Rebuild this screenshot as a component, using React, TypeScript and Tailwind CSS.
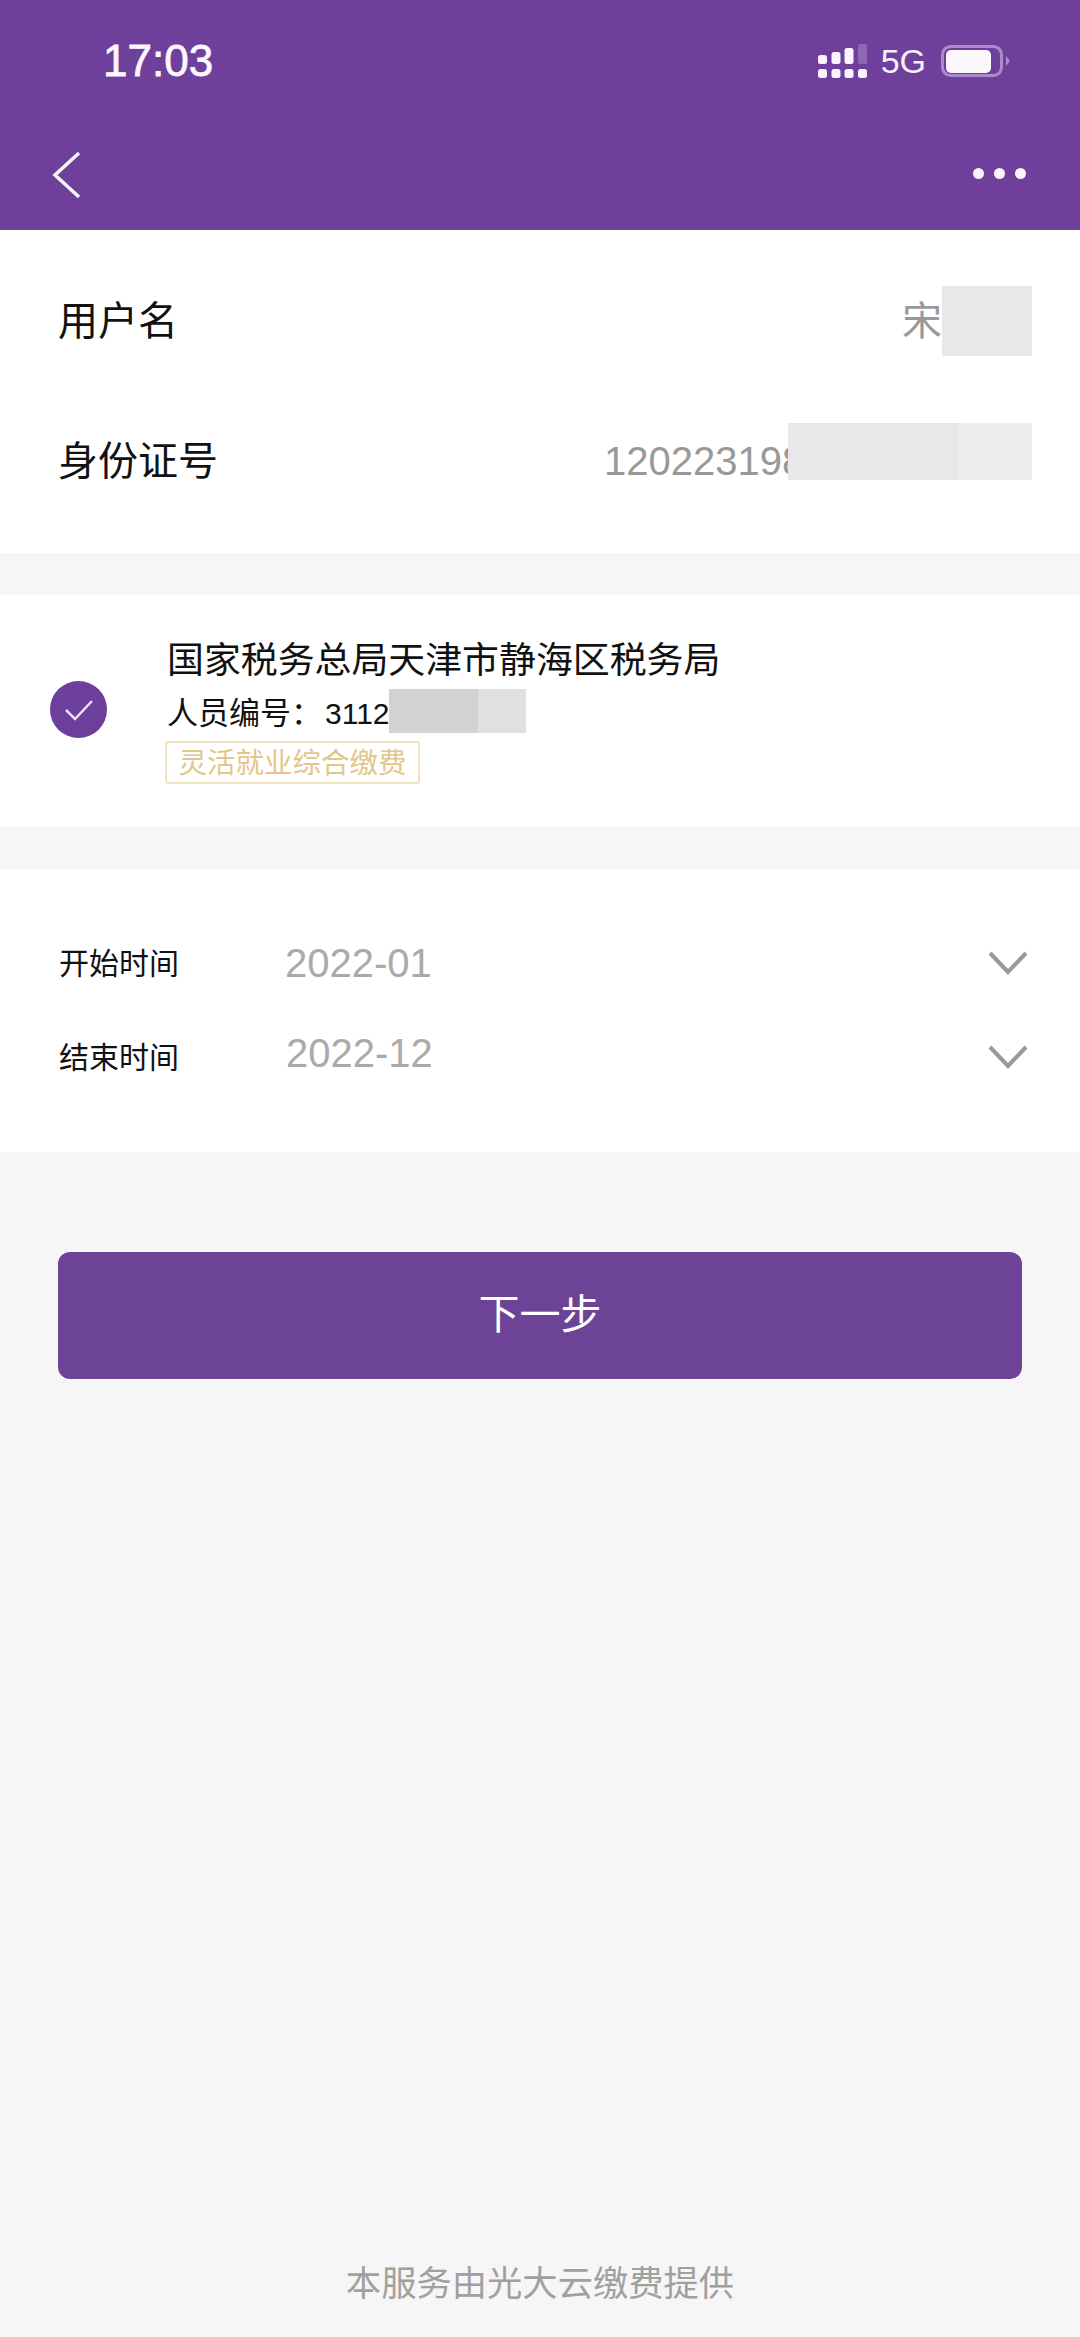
export default function App() {
  return (
    <div className="w-[1080px] h-[2337px] bg-[#f6f6f6] flex flex-col overflow-hidden font-['Liberation_Sans','Noto_Sans_CJK_SC',sans-serif] text-[#111]">
      <header className="h-[230px] shrink-0 bg-[#6e409b] text-white flex flex-col">
        <div className="h-[122px] shrink-0 pt-[36px] pl-[103px] pr-[69px] flex items-start justify-between">
          <span className="text-[44px] leading-[50px] text-[#fdf7ff] [-webkit-text-stroke:0.8px_#fdf7ff]">17:03</span>
          <div className="flex items-start pt-[8px]">
            <svg width="50" height="34" viewBox="0 0 50 34" className="block">
              <rect x="1" y="11" width="9" height="9" rx="2.5" fill="#fbf3fd" />
              <rect x="14.5" y="8" width="9" height="12" rx="2.5" fill="#fbf3fd" />
              <rect x="27.5" y="4" width="9" height="16" rx="2.5" fill="#fbf3fd" />
              <rect x="41" y="0" width="9" height="20" rx="2.5" fill="#8e68b5" />
              <rect x="1" y="25" width="9" height="9" rx="2.5" fill="#fbf3fd" />
              <rect x="14.5" y="25" width="9" height="9" rx="2.5" fill="#fbf3fd" />
              <rect x="27.5" y="25" width="9" height="9" rx="2.5" fill="#fbf3fd" />
              <rect x="41" y="25" width="9" height="9" rx="2.5" fill="#fbf3fd" />
            </svg>
            <span className="ml-[14px] text-[34px] leading-[36px] text-[#f6eefa] mt-[-1px]">5G</span>
            <svg width="70" height="34" viewBox="0 0 70 34" className="block ml-[15px] mt-[1px]">
              <rect x="1.5" y="1.5" width="59" height="29" rx="8" fill="none" stroke="#a98acb" strokeWidth="3" />
              <rect x="5" y="5" width="45" height="23" rx="5" fill="#fdf8fe" />
              <path d="M65 11 L69 16 L65 21 Z" fill="#a98acb" />
            </svg>
          </div>
        </div>
        <div className="flex-1 pl-[52px] pr-[54px] flex items-start justify-between pt-[29px]">
          <svg width="30" height="48" viewBox="0 0 30 48" className="block">
            <path d="M27 2 L3 24 L27 46" fill="none" stroke="#fbf3fd" strokeWidth="3.5" />
          </svg>
          <div className="flex gap-[10px] pt-[17px]">
            <span className="w-[11px] h-[11px] rounded-full bg-[#fbf3fd]" />
            <span className="w-[11px] h-[11px] rounded-full bg-[#fbf3fd]" />
            <span className="w-[11px] h-[11px] rounded-full bg-[#fbf3fd]" />
          </div>
        </div>
      </header>

      <section className="h-[323px] shrink-0 bg-white pt-[46px] pl-[58px] pr-[48px]">
        <div className="h-[90px] flex items-center justify-between">
          <span className="text-[40px] leading-[50px]">用户名</span>
          <div className="flex items-center">
            <span className="text-[40px] leading-[50px] text-[#999]">宋</span>
            <div className="w-[90px] h-[70px] bg-[#e8e8e8]" />
          </div>
        </div>
        <div className="h-[93px] flex items-center justify-between mt-[48px]">
          <span className="text-[40px] leading-[50px]">身份证号</span>
          <div className="relative flex items-center w-[428px] overflow-hidden h-[75px]">
            <span className="text-[40px] leading-[50px] text-[#999]">120223198</span>
            <div className="absolute left-[184px] top-0 w-[244px] h-[57px] flex">
              <div className="w-[171px] bg-[#e8e8ea]" />
              <div className="flex-1 bg-[#eeeef0]" />
            </div>
          </div>
        </div>
      </section>

      <section className="h-[231px] shrink-0 mt-[42px] bg-white flex items-center pl-[50px]">
        <div className="w-[57px] h-[57px] rounded-full bg-[#6d3f9c] flex items-center justify-center mt-[-2px]">
          <svg width="30" height="22" viewBox="0 0 30 22" className="block">
            <path d="M2 11 L11 20 L28 2" fill="none" stroke="#f3dcf5" strokeWidth="2.5" />
          </svg>
        </div>
        <div className="ml-[60px] flex flex-col items-start">
          <div className="text-[36.9px] leading-[46px]">国家税务总局天津市静海区税务局</div>
          <div className="flex items-center h-[44px] mt-[5px] text-[31px] leading-[44px]">
            <span className="relative top-[3px]">人员编号：</span>
            <span className="text-[30px] relative top-[3px] left-[3px]">3112</span>
            <div className="w-[137px] h-[44px] flex ml-[2px]">
              <div className="w-[89px] bg-[#d2d2d2]" />
              <div className="flex-1 bg-[#e0e0e0]" />
            </div>
          </div>
          <div className="mt-[8px] ml-[-2px] w-[255px] h-[43px] border-[2px] border-[#f1e2c2] rounded-[3px] flex items-center justify-center text-[28.5px] leading-[43px] pt-[2px] text-[#e3c68a]">灵活就业综合缴费</div>
        </div>
      </section>

      <section className="h-[283px] shrink-0 mt-[43px] bg-white pl-[59px] pr-[52px] pt-[47px]">
        <div className="h-[94px] flex items-center">
          <span className="w-[226px] text-[30px]">开始时间</span>
          <span className="text-[40px] leading-[50px] text-[#aaa]">2022-01</span>
          <svg width="40" height="24" viewBox="0 0 40 24" className="block ml-auto">
            <path d="M2 2 L20 21 L38 2" fill="none" stroke="#999" strokeWidth="4" />
          </svg>
        </div>
        <div className="h-[94px] flex items-center">
          <span className="w-[227px] text-[30px]">结束时间</span>
          <span className="text-[40px] leading-[50px] text-[#aaa] mt-[-8px]">2022-12</span>
          <svg width="40" height="24" viewBox="0 0 40 24" className="block ml-auto">
            <path d="M2 2 L20 21 L38 2" fill="none" stroke="#999" strokeWidth="4" />
          </svg>
        </div>
      </section>

      <div className="mt-[100px] mx-[58px] h-[127px] shrink-0 rounded-[12px] bg-[#6d4397] text-white flex items-center justify-center text-[41px]">下一步</div>

      <div className="mt-auto mb-[32px] text-center text-[35.3px] leading-[42px] text-[#a0a0a0]">本服务由光大云缴费提供</div>
    </div>
  );
}
